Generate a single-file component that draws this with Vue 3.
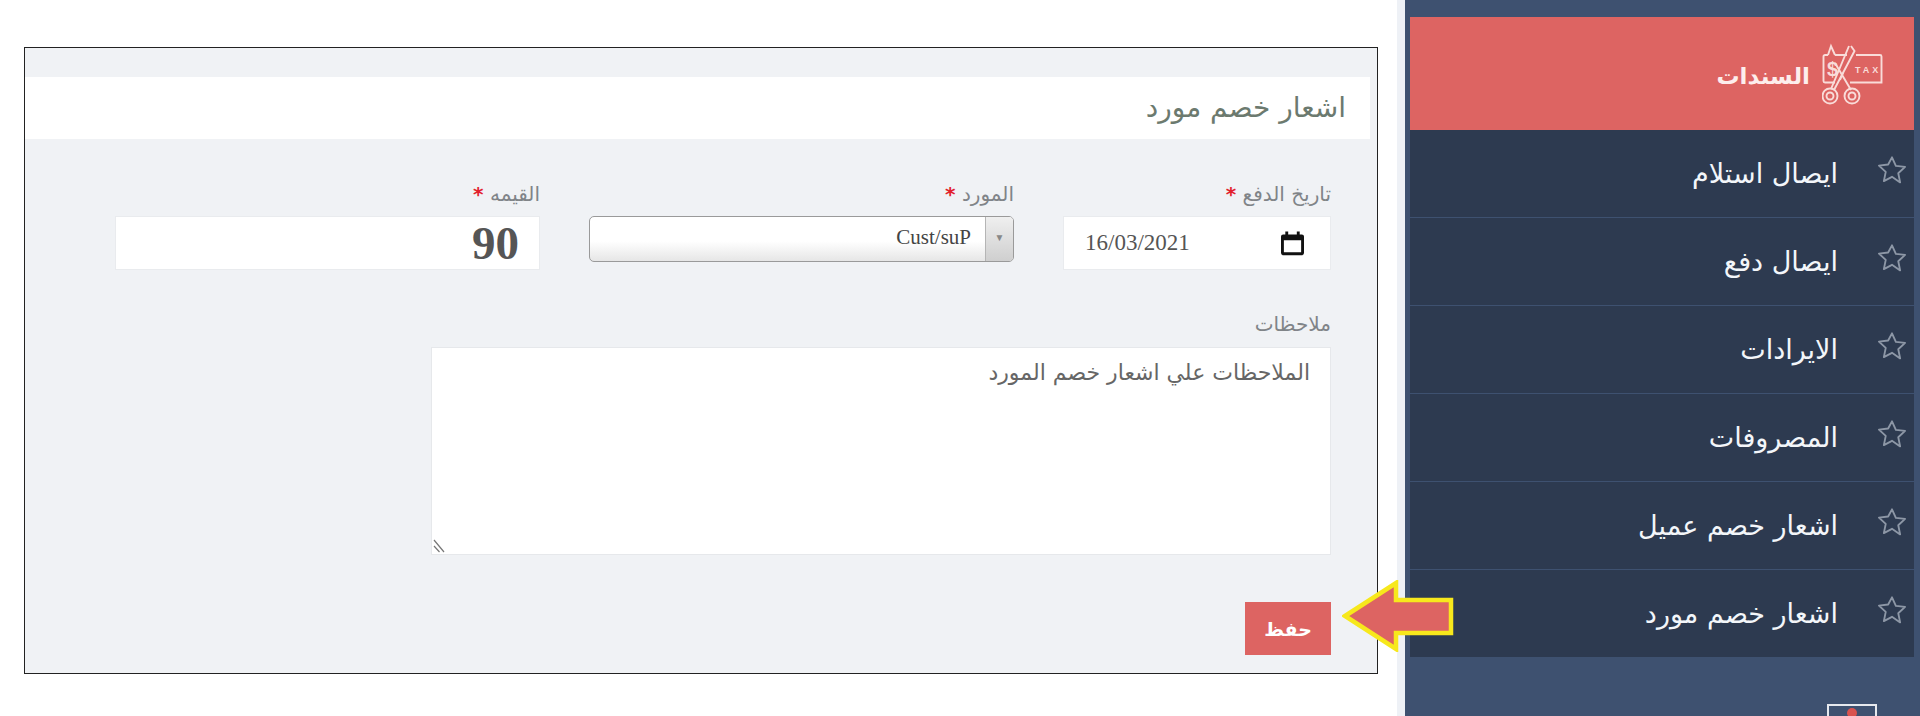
<template>
  <div class="page">
    <main class="main">
      <section class="panel">
        <h1 class="panel-title">اشعار خصم مورد</h1>
        <form class="form" @submit.prevent>
          <div class="row">
            <div class="field">
              <label>تاريخ الدفع <b>*</b></label>
              <div class="date-box">
                <svg class="cal" viewBox="0 0 16 18" width="23" height="26">
                  <path d="M3 1h2v2h6V1h2v2h1.500A1.500 1.500 0 0 1 16 4.500V16a1.500 1.500 0 0 1-1.500 1.500h-13A1.500 1.500 0 0 1 0 16V4.500A1.500 1.500 0 0 1 1.500 3H3zM2 7v8.500h12V7z" fill="#111" />
                </svg>
                <span dir="ltr">16/03/2021</span>
              </div>
            </div>
            <div class="field">
              <label>المورد <b>*</b></label>
              <div class="select-box">
                <span class="select-arrow">▼</span>
                <span class="select-value" dir="ltr">Cust/suP</span>
              </div>
            </div>
            <div class="field">
              <label>القيمه <b>*</b></label>
              <input class="amount" type="text" value="90" readonly />
            </div>
          </div>
          <div class="notes">
            <label>ملاحظات</label>
            <div class="notes-box">
              <textarea readonly>الملاحظات علي اشعار خصم المورد</textarea>
              <svg class="grip" viewBox="0 0 12 14" width="12" height="14" stroke="#777" stroke-width="1.200">
                <path d="M1 1l10 12M1 7l5.500 6" />
              </svg>
            </div>
          </div>
          <button class="save" type="submit">حفظ</button>
        </form>
        <svg class="pointer" viewBox="0 0 112 72" width="112" height="72">
          <path d="M3 36 L54 3 V20 H109 V53 H54 V69 Z" fill="#dd6462" stroke="#f7e81c" stroke-width="4.500" stroke-linejoin="miter" />
        </svg>
      </section>
    </main>

    <aside class="sidebar">
      <div class="menu-head">
        <svg class="tax-icon" viewBox="0 0 62 62" width="62" height="62" fill="none" stroke="#f9dcd9" stroke-width="1.900">
          <path d="M6 12H3a1.500 1.500 0 0 0-1.500 1.500V38A1.500 1.500 0 0 0 3 39.500h10M13 12h12M34 12h24a1.500 1.500 0 0 1 1.500 1.500V39.500H28" />
          <path d="M6 12l3-9 4 9" />
          <path d="M29 3l3.500 5L12 47M27 3L9 46" />
          <path d="M13 20l16 27M18 37l3-7" />
          <circle cx="8" cy="53" r="7.500" />
          <circle cx="8" cy="53" r="3.500" />
          <circle cx="30" cy="53" r="7.500" />
          <circle cx="30" cy="53" r="3.500" />
          <text x="5" y="33" font-size="20" font-weight="700" fill="#f9dcd9" stroke="none" font-family="Liberation Sans" direction="ltr">$</text>
          <text x="33" y="30" font-size="9" font-weight="700" letter-spacing="3" fill="#f9dcd9" stroke="none" font-family="Liberation Sans" direction="ltr">TAX</text>
        </svg>
        <span class="head-text">السندات</span>
      </div>
      <ul class="menu">
        <li v-for="item in items" :key="item">
          <svg class="star" viewBox="0 0 24 24" width="32" height="32" fill="none" stroke="#8d97a6" stroke-width="1.400" stroke-linejoin="round">
            <path d="M12 2.500l2.900 6.400 6.900.8-5.100 4.700 1.400 6.900L12 17.100l-6.100 3.200 1.400-6.900-5.100-4.700 6.900-.8z" />
          </svg>
          <span>{{ item }}</span>
        </li>
      </ul>
      <div class="next-icon"><i></i></div>
    </aside>
  </div>
</template>

<script setup>
const items = [
  'ايصال استلام',
  'ايصال دفع',
  'الايرادات',
  'المصروفات',
  'اشعار خصم عميل',
  'اشعار خصم مورد'
]
</script>

<style>
html, body {
  margin: 0;
  background: #fff;
  overflow: hidden;
}
</style>

<style scoped>
.page {
  display: flex;
  flex-direction: row-reverse;
  width: 1920px;
  height: 716px;
  overflow: hidden;
  direction: rtl;
  font-family: "DejaVu Sans", "Liberation Sans", sans-serif;
}

.main {
  width: 1397px;
  padding: 47px 19px 0 24px;
  box-sizing: border-box;
}

.panel {
  position: relative;
  height: 627px;
  box-sizing: border-box;
  border: 1px solid #222;
  background: #f0f2f5;
  padding: 29px 7px 0 0;
}

.panel-title {
  margin: 0;
  height: 62px;
  padding-right: 24px;
  background: #fff;
  color: #6c7a6f;
  font-size: 28px;
  font-weight: 400;
  line-height: 62px;
}

.form {
  padding: 42px 39px 0 0;
}

.row {
  display: grid;
  grid-template-columns: 268px 425px 425px;
  column-gap: 49px;
  align-items: start;
}

label {
  display: block;
  height: 26px;
  margin-bottom: 9px;
  color: #808488;
  font-size: 20px;
  line-height: 26px;
}

label b {
  color: #e2202c;
  font-weight: 700;
}

.date-box {
  display: flex;
  align-items: center;
  justify-content: space-between;
  height: 54px;
  padding: 0 26px 0 21px;
  box-sizing: border-box;
  background: #fff;
  border: 1px solid #e9ebee;
  color: #555;
  font-family: "Liberation Serif", serif;
  font-size: 23px;
}

.select-box {
  display: flex;
  align-items: stretch;
  height: 46px;
  box-sizing: border-box;
  border: 1px solid #9a9a9a;
  border-radius: 5px;
  background: linear-gradient(#fff 0, #fff 55%, #e6e6e6 100%);
  overflow: hidden;
  font-family: "Liberation Serif", serif;
}

.select-arrow {
  width: 27px;
  border-left: 1px solid #b5b5b5;
  background: linear-gradient(#efefef, #cfcfcf);
  color: #888;
  font-size: 10px;
  line-height: 42px;
  text-align: center;
}

.select-value {
  padding: 0 14px;
  color: #444;
  font-size: 21px;
  line-height: 40px;
}

.amount {
  display: block;
  width: 100%;
  height: 54px;
  padding: 0 20px;
  box-sizing: border-box;
  background: #fff;
  border: 1px solid #e9ebee;
  outline: 0;
  color: #555;
  font-family: "Liberation Serif", serif;
  font-size: 47px;
  font-weight: 700;
  text-align: right;
}

.notes {
  margin-top: 41px;
}

.notes label {
  margin-bottom: 10px;
}

.notes-box {
  position: relative;
  width: 900px;
  height: 208px;
}

.notes textarea {
  display: block;
  width: 100%;
  height: 100%;
  padding: 10px 20px;
  box-sizing: border-box;
  background: #fff;
  border: 1px solid #e6e8eb;
  outline: 0;
  resize: none;
  color: #666;
  font-family: "DejaVu Sans", sans-serif;
  font-size: 22px;
  line-height: 30px;
}

.grip {
  position: absolute;
  left: 2px;
  bottom: 2px;
}

.save {
  display: block;
  width: 86px;
  height: 53px;
  margin: 47px 0 0;
  border: 0;
  background: #dd6462;
  color: #fff;
  font-family: "DejaVu Sans", sans-serif;
  font-size: 19px;
  font-weight: 700;
}

.pointer {
  position: absolute;
  left: 1317px;
  top: 532px;
  z-index: 2;
}

.sidebar {
  flex: none;
  width: 523px;
  height: 716px;
  box-sizing: border-box;
  border-left: 8px solid #eef1f6;
  background: #3e5170;
  padding: 17px 6px 0 5px;
}

.menu-head {
  display: flex;
  align-items: center;
  height: 113px;
  padding-right: 30px;
  gap: 12px;
  background: #dd6462;
  color: #fdeeed;
  font-size: 23px;
  font-weight: 700;
}

.head-text {
  padding-top: 4px;
}

.menu {
  margin: 0;
  padding: 0;
  list-style: none;
}

.menu li {
  display: flex;
  align-items: center;
  height: 87px;
  padding-right: 6px;
  gap: 38px;
  background: #2d3a50;
  border-bottom: 1px solid #3e5170;
  color: #f3f6fa;
  font-size: 27px;
}

.star {
  margin-bottom: 7px;
}

.next-icon {
  position: relative;
  width: 50px;
  height: 40px;
  margin: 46px 37px 0 0;
  border: 2px solid #e6e9ee;
  box-sizing: border-box;
}

.next-icon i {
  position: absolute;
  left: 18px;
  top: 2px;
  width: 10px;
  height: 10px;
  border-radius: 50%;
  background: #d9534f;
}
</style>
